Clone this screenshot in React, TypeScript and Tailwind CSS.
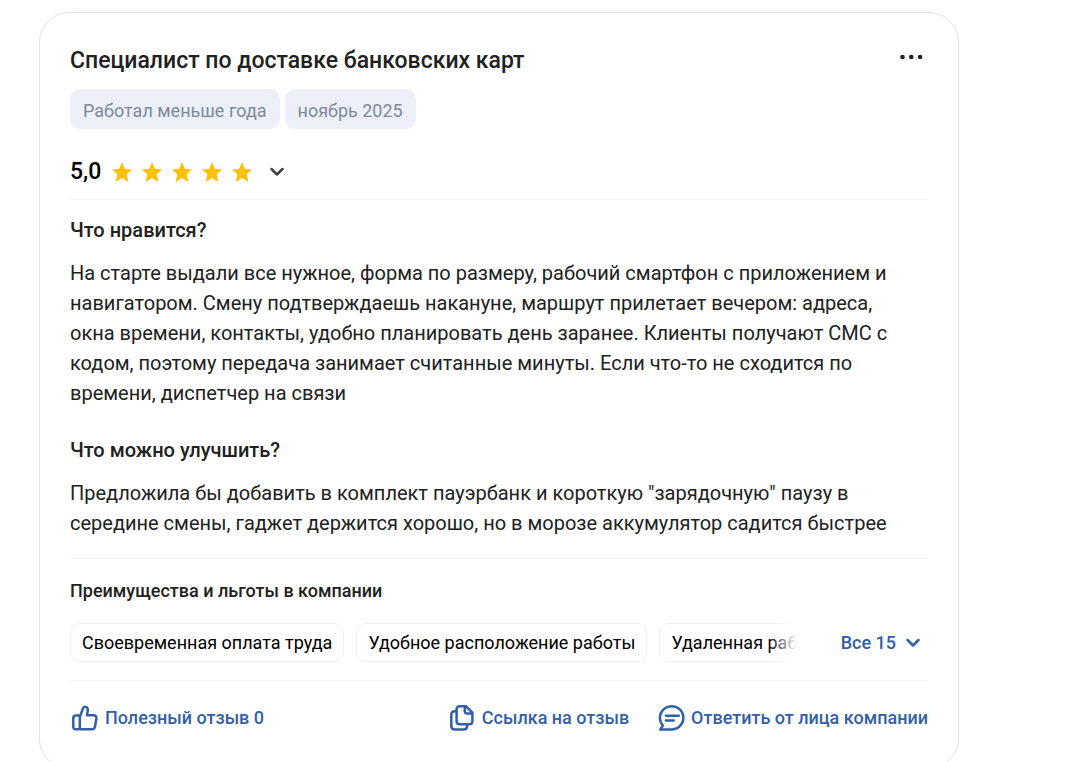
import React from 'react';

const periodTags = ['Работал меньше года', 'ноябрь 2025'];

const benefits = [
  'Своевременная оплата труда',
  'Удобное расположение работы',
  'Удаленная работа',
];

const sections = [
  {
    title: 'Что нравится?',
    text: 'На старте выдали все нужное, форма по размеру, рабочий смартфон с приложением и навигатором. Смену подтверждаешь накануне, маршрут прилетает вечером: адреса, окна времени, контакты, удобно планировать день заранее. Клиенты получают СМС с кодом, поэтому передача занимает считанные минуты. Если что-то не сходится по времени, диспетчер на связи',
  },
  {
    title: 'Что можно улучшить?',
    text: 'Предложила бы добавить в комплект пауэрбанк и короткую "зарядочную" паузу в середине смены, гаджет держится хорошо, но в морозе аккумулятор садится быстрее',
  },
];

const StarIcon = () => (
  <svg width="20" height="20" viewBox="0 0 20 20" fill="#ffc107">
    <path d="M10 0L12.800 6.800L20 7.500L14.700 12.300L16.300 20L10 16L3.700 20L5.300 12.300L0 7.500L7.200 6.800Z" />
  </svg>
);

const ChevronIcon = () => (
  <svg
    width="16"
    height="10"
    viewBox="0 0 16 10"
    fill="none"
    stroke="currentColor"
    strokeWidth="2.5"
    strokeLinecap="round"
    strokeLinejoin="round"
  >
    <path d="M2.500 2L8 7.500 13.500 2" />
  </svg>
);

const iconProps = {
  width: 28,
  height: 28,
  viewBox: '0 0 28 28',
  fill: 'none',
  stroke: 'currentColor',
  strokeWidth: 2.5,
  strokeLinecap: 'round' as const,
  strokeLinejoin: 'round' as const,
};

const ThumbIcon = () => (
  <svg {...iconProps}>
    <path d="M10.200 12.200L12.900 4.400C13.400 3 14.200 2.500 15.200 2.700C17 3 18.100 4.500 17.800 6.300L17 11.200H23.600C25.600 11.200 26.700 12.400 26.400 14.200L25 22.600C24.700 24.400 23.700 25.300 21.900 25.300H5.700C4.200 25.300 3.300 24.400 3.300 23V14.200C3.300 12.600 4.400 11.500 6 11.500H9.800V25.300" />
  </svg>
);

const CopyIcon = () => (
  <svg {...iconProps}>
    <path d="M16.800 2.200H10.600C8.800 2.200 7.600 3.400 7.600 5.200V17.300C7.600 19.100 8.800 20.300 10.600 20.300H20.400C22.200 20.300 23.400 19.100 23.400 17.300V8.600Z" />
    <path d="M15.800 4V7.300C15.800 8.800 16.600 9.500 18 9.500H22" />
    <path d="M7.400 7.200H5.600C3.500 7.200 2.300 8.400 2.300 10.500V22C2.300 24.300 3.600 25.500 5.800 25.500H14.500C16.500 25.500 17.900 24.500 18.100 22.600V20.500" />
  </svg>
);

const ReplyIcon = () => (
  <svg {...iconProps}>
    <path d="M2.300 25.400L4.900 21.500A11.700 11.600 0 1 1 14 25.400Z" />
    <path d="M7.900 11.700H20.700M7.900 16.500H15.700" />
  </svg>
);

const App: React.FC = () => (
  <main className="h-screen overflow-hidden bg-white pl-[39px] pr-[108px] pt-3 font-['Roboto',sans-serif] text-[#212121]">
    <article className="rounded-[30px] border border-[#dfe3eb] px-[30px] pb-9 pt-8">
      <header className="flex items-start justify-between gap-4">
        <h2 className="pt-px text-[23px] font-medium leading-[30px]">
          Специалист по доставке банковских карт
        </h2>
        <button type="button" aria-label="Меню" className="flex h-6 items-center px-1">
          <svg width="25" height="6" viewBox="0 0 25 6" fill="currentColor">
            <circle cx="3.500" cy="3" r="2.300" />
            <circle cx="12.300" cy="3" r="2.300" />
            <circle cx="21.100" cy="3" r="2.300" />
          </svg>
        </button>
      </header>

      <div className="mt-[13px] flex gap-[5px]">
        {periodTags.map(tag => (
          <span
            key={tag}
            className="rounded-[10px] bg-[#edf0f8] px-[13px] pb-[7px] pt-[11px] text-[18px] leading-[22px] text-[#7d8a99]"
          >
            {tag}
          </span>
        ))}
      </div>

      {/* Rating */}
      <div className="flex items-center border-b border-[#f4f5f8] pb-3 pt-[28px]">
        <span className="w-[42px] text-[23px] font-medium leading-[30px] text-black">5,0</span>
        <div className="flex gap-[10px]">
          {[1, 2, 3, 4, 5].map(n => (
            <StarIcon key={n} />
          ))}
        </div>
        <button type="button" aria-label="Подробнее" className="ml-[17px] text-[#424242]">
          <ChevronIcon />
        </button>
      </div>

      <div className="flex flex-col gap-[27px] border-b border-[#f4f5f8] pb-5 pt-[15px]">
        {sections.map(s => (
          <section key={s.title}>
            <h3 className="text-[20px] font-medium leading-[30px]">{s.title}</h3>
            <p className="mt-[13px] pr-5 text-[20px] leading-[30px]">{s.text}</p>
          </section>
        ))}
      </div>

      <section className="border-b border-[#f4f5f8] pb-[18px] pt-5">
        <h3 className="text-[18px] font-medium leading-6">Преимущества и льготы в компании</h3>
        <div className="mt-5 flex items-center justify-between">
          <div className="relative mr-11 min-w-0 flex-1 overflow-hidden">
            <ul className="flex gap-3">
              {benefits.map(b => (
                <li
                  key={b}
                  className="shrink-0 whitespace-nowrap rounded-[10px] border border-[#edf0f8] px-[11px] pb-[7px] pt-2 text-[18px] leading-[22px] text-black"
                >
                  {b}
                </li>
              ))}
            </ul>
            <div className="absolute inset-y-0 right-0 w-7 bg-gradient-to-r from-transparent to-white" />
          </div>
          <button
            type="button"
            className="flex items-center gap-[9px] pr-[7px] text-[18px] font-medium leading-6 text-[#315fa8]"
          >
            Все 15
            <ChevronIcon />
          </button>
        </div>
      </section>

      <footer className="flex items-center justify-between pt-[23px] text-[18px] font-medium leading-7 text-[#315fa8]">
        <button type="button" className="flex items-center gap-[7px]">
          <ThumbIcon />
          Полезный отзыв 0
        </button>
        <div className="flex gap-[29px]">
          <button type="button" className="flex items-center gap-[5px]">
            <CopyIcon />
            Ссылка на отзыв
          </button>
          <button type="button" className="flex items-center gap-[5px]">
            <ReplyIcon />
            Ответить от лица компании
          </button>
        </div>
      </footer>
    </article>
  </main>
);

export default App;
